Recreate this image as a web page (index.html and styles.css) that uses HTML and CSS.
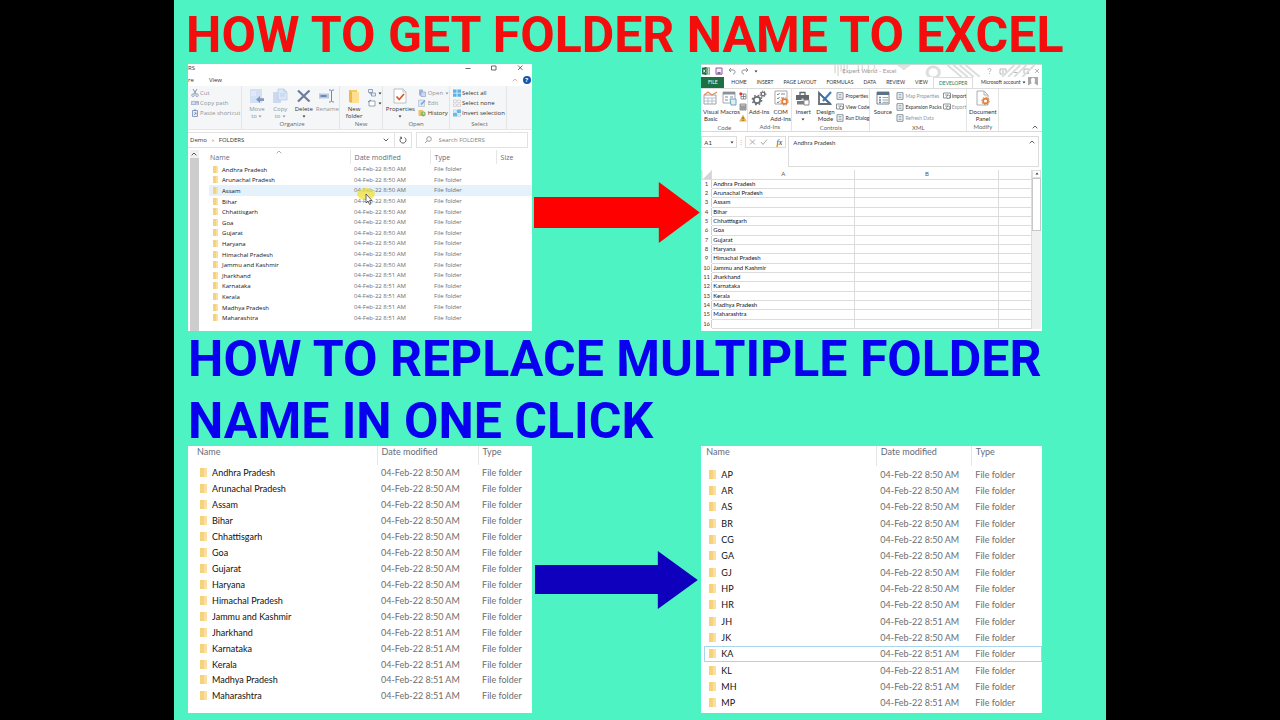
FILE: index.html
```html
<!DOCTYPE html>
<html lang="en">
<head>
<meta charset="utf-8">
<title>Folder names to Excel</title>
<link rel="stylesheet" href="styles.css">
</head>
<body>
<svg class="defs" aria-hidden="true">
<symbol id="cut" viewBox="0 0 8 8"><path d="M2 0l3 5M6 0L3 5" stroke="#8396b5" fill="none"/><circle cx="2" cy="6.2" r="1.3" fill="none" stroke="#8396b5" stroke-width=".8"/><circle cx="6" cy="6.2" r="1.3" fill="none" stroke="#8396b5" stroke-width=".8"/></symbol>
<symbol id="path" viewBox="0 0 8 8"><path d="M0 2h8v4H0z" fill="#a9b9d4"/><path d="M1 3l1 2 1-2 1 2M5 5h2" stroke="#f5f8fc" stroke-width=".7" fill="none"/></symbol>
<symbol id="paste" viewBox="0 0 8 8"><path d="M1.5 1.5h5v6h-5z" fill="#e9eff9" stroke="#7f95bd" stroke-width=".9"/><path d="M3 .5h2v1.5H3z" fill="#7f95bd"/><path d="M3 6l2-2M3.400 3.800H5v1.700" stroke="#5f7fb5" stroke-width=".7" fill="none"/></symbol>
<symbol id="move" viewBox="0 0 16 16"><path d="M1 1h12v14H1z" fill="#d3e0f3"/><path d="M2 3h5v5H2z" fill="#e0e9f7"/><path d="M7 11.500L11 8v2.200h4v2.800h-4V15z" fill="#7f98c0"/></symbol>
<symbol id="copy" viewBox="0 0 16 16"><path d="M1 4h8v11H1z" fill="#cbdaf1"/><path d="M6 1h6l3 3v8H6z" fill="#dce6f6" stroke="#b4c7e4" stroke-width=".7"/><path d="M12 1v3h3M8 6h5M8 8h5" stroke="#b4c7e4" stroke-width=".7" fill="none"/></symbol>
<symbol id="delete" viewBox="0 0 16 16"><path d="M2 2.500l11.500 11M13.500 2.500L2 13.500" stroke="#6c7f9f" stroke-width="2.300"/></symbol>
<symbol id="rename" viewBox="0 0 16 16"><path d="M0 5.500h10v5H0z" fill="#b7c8e2"/><path d="M1.500 7h6v2h-6z" fill="#7188ae"/><path d="M12.500 3v10M10 2c1.500 0 2.500.3 2.500 1.200C12.500 2.300 13.500 2 15 2M10 14c1.500 0 2.500-.3 2.500-1.200 0 .9 1 1.200 2.500 1.200" stroke="#7188ae" fill="none"/></symbol>
<symbol id="folder" viewBox="0 0 16 16"><path d="M3 2h8v12H3z" fill="#f7c95f"/><path d="M6 4h7v11H6z" fill="#ffdf90"/><path d="M3 2l3 2v11l-3-1z" fill="#edb94b"/></symbol>
<symbol id="newitem" viewBox="0 0 8 8"><path d="M.5.5h4v3h-4zM3.500 4h4v3h-4zM2 3v2h2" fill="#eaf0f8" stroke="#7c92ad" stroke-width=".8"/></symbol>
<symbol id="easy" viewBox="0 0 8 8"><path d="M1 2h6v5H1z" fill="#fff" stroke="#8290a0" stroke-width=".8"/><path d="M0 3l3-2" stroke="#5c86b5"/></symbol>
<symbol id="props" viewBox="0 0 16 16"><path d="M2 1h9l3 3v11H2z" fill="#fff" stroke="#aab2ba" stroke-width=".8"/><path d="M11 1v3h3" fill="none" stroke="#aab2ba" stroke-width=".7"/><path d="M4.500 8.500l2.700 3L12 6" fill="none" stroke="#d75b2b" stroke-width="1.800"/></symbol>
<symbol id="open" viewBox="0 0 8 8"><path d="M1 .5h4v6H1z" fill="#9fb7dc"/><path d="M3 3h4.500v4.500H3z" fill="#ccdaef" stroke="#7c98c6" stroke-width=".6"/></symbol>
<symbol id="edit" viewBox="0 0 8 8"><path d="M.5 1h6v6.500h-6z" fill="#dbe6f6" stroke="#a8bad5" stroke-width=".6"/><path d="M3 5.500L7 1.500" stroke="#7d98c5" stroke-width="1.200"/></symbol>
<symbol id="history" viewBox="0 0 8 8"><path d="M.5 1h4l1 1v5h-5z" fill="#ebc35c"/><circle cx="5.300" cy="5" r="2.400" fill="#7fb65b"/><path d="M5.300 3.500V5H6.500" stroke="#fff" stroke-width=".7" fill="none"/></symbol>
<symbol id="selall" viewBox="0 0 8 8"><path d="M0 .5h3.600v3.200H0zM4.400.5H8v3.200H4.400zM0 4.500h3.600v3.200H0zM4.400 4.500H8v3.200H4.400z" fill="#5ab2e6"/></symbol>
<symbol id="selnone" viewBox="0 0 8 8"><path d="M.5 1h2.800v2.400H.5zM4.700 1h2.800v2.400H4.700zM.5 5h2.800v2.400H.5zM4.700 5h2.800v2.400H4.700z" fill="#fff" stroke="#c2b9bd" stroke-width=".6"/></symbol>
<symbol id="selinv" viewBox="0 0 8 8"><path d="M4 .5h4V4H4zM0 4h4v3.500H0z" fill="#6bb9e6"/><path d="M.5 1h2.800v2.400H.5zM4.700 5h2.800v2.400H4.700z" fill="#edf6fc" stroke="#9fc6df" stroke-width=".6"/></symbol>
<symbol id="down" viewBox="0 0 4 3"><path d="M.5.5h3L2 2.500z" fill="currentColor"/></symbol>
<symbol id="chev" viewBox="0 0 6 4"><path d="M.7.7L3 3 5.300.7" fill="none" stroke="currentColor" stroke-width=".8"/></symbol>
<symbol id="chevup" viewBox="0 0 6 4"><path d="M.7 3.300L3 1l2.300 2.300" fill="none" stroke="currentColor" stroke-width=".8"/></symbol>
<symbol id="xl" viewBox="0 0 8 8"><path d="M3 1h5v6H3z" fill="#fff" stroke="#1f7145" stroke-width=".7"/><path d="M5.500 1v6M4 3h4M4 5h4" stroke="#1f7145" stroke-width=".5"/><path d="M0 .8L4.500 0v8L0 7.200z" fill="#1a6b3f"/><path d="M1.200 2.500l2 3M3.200 2.500l-2 3" stroke="#fff" stroke-width=".8"/></symbol>
<symbol id="save" viewBox="0 0 8 8"><path d="M1 1h6v6.200H1z" fill="#f5edf8" stroke="#87619c"/><path d="M2.500 5h3v2h-3z" fill="#87619c"/></symbol>
<symbol id="undo" viewBox="0 0 8 8"><path d="M3 1L1 3l2 2M1.200 3H5c3 0 2.500 4 0 4" fill="none" stroke="#8a9095"/></symbol>
<symbol id="redo" viewBox="0 0 8 8"><path d="M5 1l2 2-2 2M6.800 3H3C0 3 .5 7 3 7" fill="none" stroke="#8a9095"/></symbol>
<symbol id="vb" viewBox="0 0 16 16"><path d="M1 5h12v9H1z" fill="#fff" stroke="#9ba5ad"/><path d="M1 8h12M5 8v6M9 8v6M1 11h12" stroke="#a5b3bf" stroke-width=".8"/><path d="M1 5l4-3 4 3 5-3" fill="none" stroke="#e49160" stroke-width="1.400"/></symbol>
<symbol id="macros" viewBox="0 0 16 16"><path d="M1 2h12v11H1z" fill="#fff" stroke="#a4a9ad"/><path d="M1 2h12v2.500H1z" fill="#8c9297"/><path d="M3 7h3M8 7h3M3 10h3" stroke="#adb4ba" stroke-width="1.300"/><path d="M8 9h6v6H9z" fill="#e0efed" stroke="#68a5c7"/></symbol>
<symbol id="rec" viewBox="0 0 8 8"><path d="M2 2h5v5H2zM2 4.500h5M4.500 2v5" fill="#fff" stroke="#777" stroke-width=".8"/><circle cx="1.800" cy="1.800" r="1.500" fill="#d33"/></symbol>
<symbol id="rel" viewBox="0 0 8 8"><path d="M1 1h6v6H1zM1 3h6M1 5h6M3 3v4M5 3v4" fill="#ddd" stroke="#777" stroke-width=".8"/></symbol>
<symbol id="warn" viewBox="0 0 8 8"><path d="M4 .5L7.800 7.500H.2z" fill="#e9b14a"/><path d="M4 3v2.300M4 6v1" stroke="#5c4520" stroke-width=".8"/></symbol>
<symbol id="gears" viewBox="0 0 16 16"><circle cx="6" cy="10" r="3.200" fill="none" stroke="#6b6f73" stroke-width="1.800"/><circle cx="6" cy="10" r="4.700" fill="none" stroke="#6b6f73" stroke-width="1.400" stroke-dasharray="1.800 1.900"/><circle cx="12" cy="4" r="1.800" fill="none" stroke="#6b6f73" stroke-width="1.300"/><circle cx="12" cy="4" r="2.900" fill="none" stroke="#6b6f73" stroke-dasharray="1.400 1"/></symbol>
<symbol id="com" viewBox="0 0 16 16"><path d="M2 1h12v13H2z" fill="#fff" stroke="#a4a9ad"/><path d="M4 4l1 1 1.500-2M4 8l1 1 1.500-2M4 12l1 1 1.500-2M8 4h4M8 8h3" fill="none" stroke="#85898d"/><circle cx="11.500" cy="11.500" r="2.400" fill="#fff" stroke="#e0803d" stroke-width="1.600"/><circle cx="11.500" cy="11.500" r="3.700" fill="none" stroke="#e0803d" stroke-dasharray="1.500 1.400"/></symbol>
<symbol id="insert" viewBox="0 0 16 16"><path d="M1 5h13v5H1z" fill="#63686c"/><path d="M5 5V2.500h5V5" fill="none" stroke="#63686c" stroke-width="1.300"/><path d="M2 11h11v3.500H2z" fill="#7a7f83"/><path d="M9 10h5v5H9z" fill="#fff" stroke="#888"/><path d="M6.500 8.500h2V11h-2z" fill="#ddd"/></symbol>
<symbol id="design" viewBox="0 0 16 16"><path d="M2 3v11h11z" fill="none" stroke="#676c70" stroke-width="1.800"/><path d="M14 2L6 11" stroke="#3e7fb9" stroke-width="2.200"/><path d="M2 3l12 11" stroke="#3e6f99" stroke-width="1.300"/></symbol>
<symbol id="list" viewBox="0 0 8 8"><path d="M1 .7h6v6.600H1z" fill="#fff" stroke="#6d757b" stroke-width=".8"/><path d="M2.500 2.500h3M2.500 4h3M2.500 5.500h3" stroke="#6e94b0" stroke-width=".7"/></symbol>
<symbol id="code" viewBox="0 0 8 8"><path d="M.5 1h7v5h-7z" fill="#fff" stroke="#71787d" stroke-width=".8"/><circle cx="5.300" cy="4.800" r="1.700" fill="#fff" stroke="#71787d" stroke-width=".8"/><path d="M2 3h3" stroke="#71787d" stroke-width=".7"/></symbol>
<symbol id="source" viewBox="0 0 16 16"><path d="M2 2h12v12H2z" fill="#fff" stroke="#7c868d"/><path d="M2 2h12v3H2z" fill="#5b7188"/><path d="M4 7.500h2M4 10h2M4 12.300h2" stroke="#6b8fae" stroke-width="1.500"/><path d="M7.500 7.500H13M7.500 10H13M7.500 12.300H13" stroke="#98a2aa"/></symbol>
<symbol id="docpanel" viewBox="0 0 16 16"><path d="M2 1h7l4 4v10H2z" fill="#fff" stroke="#aab0b5"/><path d="M9 1v4h4" fill="none" stroke="#aab0b5"/><circle cx="10.500" cy="11" r="2.400" fill="#fff" stroke="#e0803d" stroke-width="1.700"/><circle cx="10.500" cy="11" r="3.800" fill="none" stroke="#e0803d" stroke-dasharray="1.500 1.400"/></symbol>
</svg>

<main class="poster">
<h1 class="title title-red">HOW TO GET FOLDER NAME TO EXCEL</h1>

<div class="pair">
<section class="shot explorer" aria-label="File Explorer">
 <header class="ex-title"><span class="ex-name">RS</span><svg viewBox="0 0 60 8"><path d="M.5 4.500h5M26.500 2h4.500v4h-4.500zM53 1.500l4.500 4.500M57.500 1.500L53 6" fill="none" stroke="#444" stroke-width=".8"/></svg></header>
 <nav class="ex-tabs"><span>re</span><span>View</span><svg class="i-chev push red"><use href="#chevup"/></svg><b class="help">?</b></nav>
 <div class="ex-ribbon">
  <div class="grp g-clip"><div class="items"><div class="stack">
   <button class="dim"><svg class="i8"><use href="#cut"/></svg>Cut</button><button class="dim"><svg class="i8"><use href="#path"/></svg>Copy path</button><button class="dim"><svg class="i8"><use href="#paste"/></svg>Paste shortcut</button></div></div></div>
  <div class="grp g-org"><div class="items">
   <button class="big dim"><svg class="i16"><use href="#move"/></svg>Move<br>to <svg class="i-dn"><use href="#down"/></svg></button>
   <button class="big dim"><svg class="i16"><use href="#copy"/></svg>Copy<br>to <svg class="i-dn"><use href="#down"/></svg></button>
   <button class="big"><svg class="i16"><use href="#delete"/></svg>Delete<br><svg class="i-dn"><use href="#down"/></svg></button>
   <button class="big dim"><svg class="i16"><use href="#rename"/></svg>Rename</button></div><div class="cap">Organize</div></div>
  <div class="grp g-new"><div class="items">
   <button class="big"><svg class="i16"><use href="#folder"/></svg>New<br>folder</button>
   <div class="stack"><button aria-label="New item"><svg class="i8"><use href="#newitem"/></svg><svg class="i-dn"><use href="#down"/></svg></button><button aria-label="Easy access"><svg class="i8"><use href="#easy"/></svg><svg class="i-dn"><use href="#down"/></svg></button></div></div><div class="cap">New</div></div>
  <div class="grp g-open"><div class="items">
   <button class="big"><svg class="i16"><use href="#props"/></svg>Properties<br><svg class="i-dn"><use href="#down"/></svg></button>
   <div class="stack"><button class="dim"><svg class="i8"><use href="#open"/></svg>Open <svg class="i-dn"><use href="#down"/></svg></button><button class="dim"><svg class="i8"><use href="#edit"/></svg>Edit</button><button><svg class="i8"><use href="#history"/></svg>History</button></div></div><div class="cap">Open</div></div>
  <div class="grp g-sel"><div class="items"><div class="stack">
   <button><svg class="i8"><use href="#selall"/></svg>Select all</button><button><svg class="i8"><use href="#selnone"/></svg>Select none</button><button><svg class="i8"><use href="#selinv"/></svg>Invert selection</button></div></div><div class="cap">Select</div></div>
 </div>
 <div class="ex-address">
  <div class="crumbs"><span>Demo</span><span class="sep">›</span><span>FOLDERS</span><svg class="i-chev push"><use href="#chev"/></svg></div>
  <button class="reload" aria-label="Refresh"><svg viewBox="0 0 8 8"><path d="M2.500 1.500A3 3 0 1 0 5.500 1.500M2.500 3V1.200H.9" fill="none" stroke="#555" stroke-width=".9"/></svg></button>
  <label class="search"><svg viewBox="0 0 8 8"><circle cx="5" cy="3" r="2.300" fill="none" stroke="#888" stroke-width=".8"/><path d="M3.300 4.700L1 7" stroke="#888" stroke-width=".8"/></svg><input type="search" placeholder="Search FOLDERS" aria-label="Search FOLDERS"></label>
 </div>
 <div class="ex-body">
  <div class="ex-scroll"><svg class="i-chev"><use href="#chevup"/></svg></div>
  <div class="ex-files">
  <svg class="sort"><use href="#chevup"/></svg>
  <table class="files small">
   <colgroup><col class="s-name"><col class="s-date"><col class="s-type"><col></colgroup>
   <thead><tr><th>Name</th><th>Date modified</th><th>Type</th><th>Size</th></tr></thead>
   <tbody>
   <tr><td>Andhra Pradesh</td><td>04-Feb-22 8:50 AM</td><td>File folder</td><td></td></tr>
   <tr><td>Arunachal Pradesh</td><td>04-Feb-22 8:50 AM</td><td>File folder</td><td></td></tr>
   <tr class="hover"><td>Assam</td><td>04-Feb-22 8:50 AM</td><td>File folder</td><td></td></tr>
   <tr><td>Bihar</td><td>04-Feb-22 8:50 AM</td><td>File folder</td><td></td></tr>
   <tr><td>Chhattisgarh</td><td>04-Feb-22 8:50 AM</td><td>File folder</td><td></td></tr>
   <tr><td>Goa</td><td>04-Feb-22 8:50 AM</td><td>File folder</td><td></td></tr>
   <tr><td>Gujarat</td><td>04-Feb-22 8:50 AM</td><td>File folder</td><td></td></tr>
   <tr><td>Haryana</td><td>04-Feb-22 8:50 AM</td><td>File folder</td><td></td></tr>
   <tr><td>Himachal Pradesh</td><td>04-Feb-22 8:50 AM</td><td>File folder</td><td></td></tr>
   <tr><td>Jammu and Kashmir</td><td>04-Feb-22 8:50 AM</td><td>File folder</td><td></td></tr>
   <tr><td>Jharkhand</td><td>04-Feb-22 8:51 AM</td><td>File folder</td><td></td></tr>
   <tr><td>Karnataka</td><td>04-Feb-22 8:51 AM</td><td>File folder</td><td></td></tr>
   <tr><td>Kerala</td><td>04-Feb-22 8:51 AM</td><td>File folder</td><td></td></tr>
   <tr><td>Madhya Pradesh</td><td>04-Feb-22 8:51 AM</td><td>File folder</td><td></td></tr>
   <tr><td>Maharashtra</td><td>04-Feb-22 8:51 AM</td><td>File folder</td><td></td></tr>
   </tbody>
  </table>
  <svg class="pointer" viewBox="0 0 20 18"><ellipse cx="10" cy="6" rx="9" ry="6" fill="#f0e03a" fill-opacity=".75"/><path d="M10 6v9l2-2 1.500 3.500 1.500-.7-1.500-3.300H16z" fill="#fff" stroke="#444" stroke-width=".8"/></svg>
  </div>
 </div>
</section>

<svg class="arrow" viewBox="0 0 170 267" role="img" aria-label="Arrow"><path d="M2 133h125v-15l41 30.500L127 179v-15H2z" fill="#fe0000"/></svg>

<section class="shot excel" aria-label="Excel">
 <header class="xl-title">
  <svg class="i8"><use href="#xl"/></svg><svg class="i8"><use href="#save"/></svg><svg class="i8"><use href="#undo"/></svg><svg class="i8"><use href="#redo"/></svg><svg class="i-dn"><use href="#down"/></svg>
  <div class="xl-art"><svg viewBox="0 0 204 13" preserveAspectRatio="none"><g fill="none" stroke="#dedede"><path d="M1 0v9M4 0v12M7 0v7M10 0v10M13 0v5M24 0v8M28 0v5M34 0v9M40 0v5" stroke-width="1.500"/><path d="M63 0h12l-6 5z" fill="#e3e3e3"/><circle cx="98" cy="8" r="6" stroke-width="3"/><path d="M112 0l14 13M118 0l14 13M124 0l14 13M130 0l14 13" stroke-width="2"/><path d="M166 13l12-13M172 13l12-13M178 13l12-13M186 13l12-13" stroke-width="2"/></g></svg><span>Expert World - Excel</span></div>
  <svg class="xl-win" viewBox="0 0 54 8"><path d="M2 3c0-2 3-2 3 0 0 1-1.500 1-1.500 2M3.500 6v1M14 2h6v5h-6zM17 3v3M27.500 5.500h4M38 2h4.500v4.500H38zM49 2l4 4M53 2l-4 4" fill="none" stroke="#a5a5a5" stroke-width=".8"/></svg>
 </header>
 <nav class="xl-tabs"><b class="file">FILE</b><span>HOME</span><span>INSERT</span><span>PAGE LAYOUT</span><span>FORMULAS</span><span>DATA</span><span>REVIEW</span><span>VIEW</span><span class="on">DEVELOPER</span><span class="acct">Microsoft account <svg class="i-dn"><use href="#down"/></svg></span><svg class="face" viewBox="0 0 10 11"><path d="M0 0h10v11H0z" fill="#a9a9a9"/><path d="M3 3c0-3 4-3 4 0 0 2-.5 2.500-.5 3.500L10 8.500V11H0V8.500l3.500-2C3.500 5.500 3 5 3 3" fill="#fff"/></svg></nav>
 <div class="xl-ribbon">
  <div class="grp x-code"><div class="items"><button class="big"><svg class="i16"><use href="#vb"/></svg>Visual<br>Basic</button><button class="big"><svg class="i16"><use href="#macros"/></svg>Macros</button><div class="stack"><button aria-label="Record macro"><svg class="i8"><use href="#rec"/></svg></button><button aria-label="Relative references"><svg class="i8"><use href="#rel"/></svg></button><button aria-label="Macro security"><svg class="i8"><use href="#warn"/></svg></button></div></div><div class="cap">Code</div></div>
  <div class="grp x-add"><div class="items"><button class="big"><svg class="i16"><use href="#gears"/></svg>Add-Ins</button><button class="big"><svg class="i16"><use href="#com"/></svg>COM<br>Add-Ins</button></div><div class="cap">Add-Ins</div></div>
  <div class="grp x-ctl"><div class="items"><button class="big"><svg class="i16"><use href="#insert"/></svg>Insert<br><svg class="i-dn"><use href="#down"/></svg></button><button class="big"><svg class="i16"><use href="#design"/></svg>Design<br>Mode</button><div class="stack"><button><svg class="i8"><use href="#list"/></svg>Properties</button><button><svg class="i8"><use href="#code"/></svg>View Code</button><button><svg class="i8"><use href="#list"/></svg>Run Dialog</button></div></div><div class="cap">Controls</div></div>
  <div class="grp x-xml"><div class="items"><button class="big"><svg class="i16"><use href="#source"/></svg>Source</button><div class="stack"><button class="dim"><svg class="i8"><use href="#list"/></svg>Map Properties</button><button><svg class="i8"><use href="#list"/></svg>Expansion Packs</button><button class="dim"><svg class="i8"><use href="#list"/></svg>Refresh Data</button></div><div class="stack"><button><svg class="i8"><use href="#code"/></svg>Import</button><button class="dim"><svg class="i8"><use href="#code"/></svg>Export</button></div></div><div class="cap">XML</div></div>
  <div class="grp x-mod"><div class="items"><button class="big"><svg class="i16"><use href="#docpanel"/></svg>Document<br>Panel</button></div><div class="cap">Modify</div></div>
  <svg class="i-chev fold"><use href="#chevup"/></svg>
 </div>
 <div class="xl-formula">
  <div class="namebox"><input value="A1" aria-label="Name box"><svg class="i-dn"><use href="#down"/></svg></div>
  <span class="dots">⋮</span>
  <div class="fx"><svg viewBox="0 0 24 8"><path d="M1 1.500l5 5M6 1.500l-5 5M12 4l2 2.500 4-5" fill="none" stroke="#a8a8a8"/></svg><i>fx</i></div>
  <div class="fbar"><input value="Andhra Pradesh" aria-label="Formula bar"><svg class="i-chev"><use href="#chevup"/></svg></div>
 </div>
 <div class="xl-sheet">
  <table class="grid">
   <colgroup><col class="c-n"><col class="c-a"><col class="c-b"><col></colgroup>
   <thead><tr><th class="corner"></th><th>A</th><th>B</th><th></th></tr></thead>
   <tbody>
   <tr><th>1</th><td>Andhra Pradesh</td><td></td><td></td></tr>
   <tr><th>2</th><td>Arunachal Pradesh</td><td></td><td></td></tr>
   <tr><th>3</th><td>Assam</td><td></td><td></td></tr>
   <tr><th>4</th><td>Bihar</td><td></td><td></td></tr>
   <tr><th>5</th><td>Chhattisgarh</td><td></td><td></td></tr>
   <tr><th>6</th><td>Goa</td><td></td><td></td></tr>
   <tr><th>7</th><td>Gujarat</td><td></td><td></td></tr>
   <tr><th>8</th><td>Haryana</td><td></td><td></td></tr>
   <tr><th>9</th><td>Himachal Pradesh</td><td></td><td></td></tr>
   <tr><th>10</th><td>Jammu and Kashmir</td><td></td><td></td></tr>
   <tr><th>11</th><td>Jharkhand</td><td></td><td></td></tr>
   <tr><th>12</th><td>Karnataka</td><td></td><td></td></tr>
   <tr><th>13</th><td>Kerala</td><td></td><td></td></tr>
   <tr><th>14</th><td>Madhya Pradesh</td><td></td><td></td></tr>
   <tr><th>15</th><td>Maharashtra</td><td></td><td></td></tr>
   <tr><th>16</th><td></td><td></td><td></td></tr>
   </tbody>
  </table>
  <div class="vbar"><b><svg class="i-dn"><use href="#down"/></svg></b><i></i></div>
 </div>
</section>
</div>

<h2 class="title title-blue">HOW TO REPLACE MULTIPLE FOLDER<br>NAME IN ONE CLICK</h2>

<div class="pair">
<section class="shot" aria-label="Folders before">
 <table class="files large before">
  <colgroup><col class="b-name"><col class="b-date"><col></colgroup>
  <thead><tr><th>Name</th><th>Date modified</th><th>Type</th></tr></thead>
  <tbody>
  <tr><td>Andhra Pradesh</td><td>04-Feb-22 8:50 AM</td><td>File folder</td></tr>
  <tr><td>Arunachal Pradesh</td><td>04-Feb-22 8:50 AM</td><td>File folder</td></tr>
  <tr><td>Assam</td><td>04-Feb-22 8:50 AM</td><td>File folder</td></tr>
  <tr><td>Bihar</td><td>04-Feb-22 8:50 AM</td><td>File folder</td></tr>
  <tr><td>Chhattisgarh</td><td>04-Feb-22 8:50 AM</td><td>File folder</td></tr>
  <tr><td>Goa</td><td>04-Feb-22 8:50 AM</td><td>File folder</td></tr>
  <tr><td>Gujarat</td><td>04-Feb-22 8:50 AM</td><td>File folder</td></tr>
  <tr><td>Haryana</td><td>04-Feb-22 8:50 AM</td><td>File folder</td></tr>
  <tr><td>Himachal Pradesh</td><td>04-Feb-22 8:50 AM</td><td>File folder</td></tr>
  <tr><td>Jammu and Kashmir</td><td>04-Feb-22 8:50 AM</td><td>File folder</td></tr>
  <tr><td>Jharkhand</td><td>04-Feb-22 8:51 AM</td><td>File folder</td></tr>
  <tr><td>Karnataka</td><td>04-Feb-22 8:51 AM</td><td>File folder</td></tr>
  <tr><td>Kerala</td><td>04-Feb-22 8:51 AM</td><td>File folder</td></tr>
  <tr><td>Madhya Pradesh</td><td>04-Feb-22 8:51 AM</td><td>File folder</td></tr>
  <tr><td>Maharashtra</td><td>04-Feb-22 8:51 AM</td><td>File folder</td></tr>
  </tbody>
 </table>
</section>

<svg class="arrow" viewBox="0 0 170 267" role="img" aria-label="Arrow"><path d="M3 119h123v-14l40 29-40 29v-15H3z" fill="#0f00bd"/></svg>

<section class="shot" aria-label="Folders after">
 <table class="files large after">
  <colgroup><col class="a-name"><col class="a-date"><col></colgroup>
  <thead><tr><th>Name</th><th>Date modified</th><th>Type</th></tr></thead>
  <tbody>
  <tr><td>AP</td><td>04-Feb-22 8:50 AM</td><td>File folder</td></tr>
  <tr><td>AR</td><td>04-Feb-22 8:50 AM</td><td>File folder</td></tr>
  <tr><td>AS</td><td>04-Feb-22 8:50 AM</td><td>File folder</td></tr>
  <tr><td>BR</td><td>04-Feb-22 8:50 AM</td><td>File folder</td></tr>
  <tr><td>CG</td><td>04-Feb-22 8:50 AM</td><td>File folder</td></tr>
  <tr><td>GA</td><td>04-Feb-22 8:50 AM</td><td>File folder</td></tr>
  <tr><td>GJ</td><td>04-Feb-22 8:50 AM</td><td>File folder</td></tr>
  <tr><td>HP</td><td>04-Feb-22 8:50 AM</td><td>File folder</td></tr>
  <tr><td>HR</td><td>04-Feb-22 8:50 AM</td><td>File folder</td></tr>
  <tr><td>JH</td><td>04-Feb-22 8:51 AM</td><td>File folder</td></tr>
  <tr><td>JK</td><td>04-Feb-22 8:50 AM</td><td>File folder</td></tr>
  <tr class="focus"><td>KA</td><td>04-Feb-22 8:51 AM</td><td>File folder</td></tr>
  <tr><td>KL</td><td>04-Feb-22 8:51 AM</td><td>File folder</td></tr>
  <tr><td>MH</td><td>04-Feb-22 8:51 AM</td><td>File folder</td></tr>
  <tr><td>MP</td><td>04-Feb-22 8:51 AM</td><td>File folder</td></tr>
  </tbody>
 </table>
</section>
</div>
</main>
</body>
</html>
```
FILE: styles.css
```css
* { box-sizing: border-box; }
body { margin: 0; background: #000; font-family: "Open Sans", "Noto Sans", sans-serif; color: #333; }
svg { display: block; flex: none; }
button, input { font: inherit; color: inherit; border: 0; background: none; padding: 0; margin: 0; min-width: 0; }
.defs { position: absolute; width: 0; height: 0; }

.poster { width: 72.8%; min-height: 100vh; margin: 0 auto; padding: 0 64px 7px 14px; background: #4ef3c3; }
.title { margin: 0; white-space: nowrap; font-family: Roboto, "Liberation Sans", Arial, sans-serif; font-weight: bold; font-size: 50px; }
.title-red { height: 64px; line-height: 64px; padding-top: 3px; margin-left: -2px; color: #f30d0d; }
.title-blue { line-height: 62px; margin-top: -3px; height: 118px; color: #0a00f0; }

.pair { display: grid; grid-template-columns: 344fr 170fr 341fr; }
.shot { background: #fff; height: 267px; overflow: hidden; min-width: 0; }
.arrow { width: 100%; height: 267px; }

.i8 { width: 8px; height: 8px; }
.i16 { width: 16px; height: 16px; }
.i-dn { width: 4px; height: 3px; display: inline-block; vertical-align: middle; }
.i-chev { width: 6px; height: 4px; }
.push { margin-left: auto; }

/* shared ribbon parts */
.grp { display: flex; flex-direction: column; flex: none; border-right: 1px solid #e3e4e6; min-width: 0; }
.items { display: flex; flex: 1; padding-top: 2px; }
.stack { display: flex; flex-direction: column; flex: none; }
.stack button { display: flex; align-items: center; gap: 2px; height: 10px; white-space: nowrap; }
.big { display: block; flex: 1; line-height: 7px; text-align: center; align-self: flex-start; white-space: nowrap; }
.big .i16 { margin: 0 auto 2px; }
.cap { height: 9px; line-height: 9px; text-align: center; color: #666; }
.dim { color: #8f959c; }

/* File Explorer */
.explorer { display: flex; flex-direction: column; font-size: 6px; }
.ex-title { display: flex; justify-content: space-between; height: 9px; line-height: 8px; padding-right: 5px; overflow: hidden; }
.ex-title svg { width: 64px; height: 8px; }
.ex-tabs { display: flex; align-items: center; gap: 15px; height: 13px; padding: 0 1px 0 0; }
.ex-tabs .help { width: 8px; height: 8px; margin-left: -10px; border-radius: 50%; background: #1456b0; color: #fff; text-align: center; line-height: 8px; }
.red { color: #d99a9a; }
.ex-ribbon { display: flex; height: 44px; background: #f5f6f7; border-bottom: 1px solid #e6e7e8; }
.g-clip { width: 54px; padding-left: 3px; }
.g-clip button { gap: 1px; }
.g-org { width: 98px; padding-left: 3px; }
.g-new { width: 43px; }
.g-open { width: 67px; }
.g-sel { width: 57px; padding-left: 3px; }
.g-sel button { gap: 1px; }
.ex-address { display: flex; height: 20px; padding: 2px 4px 2px 0; gap: 4px; }
.crumbs { display: flex; flex: 1; align-items: center; gap: 5px; border: 1px solid #e2e2e2; border-left: 0; margin-right: -5px; padding: 0 5px 0 2px; }
.reload { width: 18px; border: 1px solid #e2e2e2; padding: 0 4px; }
.reload svg { width: 8px; height: 8px; }
.search { display: flex; align-items: center; width: 112px; border: 1px solid #e2e2e2; padding: 0 7px; gap: 7px; }
.search svg { width: 8px; height: 8px; }
.search input { flex: 1; }
.search input::placeholder { color: #808080; opacity: 1; }
.ex-body { display: flex; flex: 1; }
.ex-scroll { width: 9px; margin: 0 10px 0 2px; padding: 2px 1px; border-top: 8px solid #f0f0f0; background: #cdcdcd; }
.ex-scroll svg { margin-top: -8px; }
.ex-files { position: relative; flex: 1; min-width: 0; }
.sort { position: absolute; left: 67px; top: 0; width: 6px; height: 4px; color: #999; }
.pointer { position: absolute; left: 147px; top: 38px; width: 20px; height: 18px; }

/* file lists */
.files { width: 100%; border-collapse: collapse; table-layout: fixed; }
.files th, .files td { padding: 0 0 0 4px; font-weight: normal; text-align: left; white-space: nowrap; line-height: 1; color: #6e6e6e; }
.files th { color: #5f6b7c; border-right: 1px solid #e6e6e6; }
.files th:last-child { border-right: 0; }
.files td:first-child { color: #111; }
.files td:first-child::before { content: ""; display: inline-block; vertical-align: -1px; background: linear-gradient(90deg, #f7d27c 60%, #f9e0a0 60%); }
.small { height: 173px; }
.small th { font-size: 7px; }
.small thead tr { height: 14px; }
.small th:first-child { padding-left: 1px; }
.small td:first-child::before { width: 5px; height: 7px; margin-right: 4px; }
.s-name { width: 141px; } .s-date { width: 80px; } .s-type { width: 66px; }
.hover { background: #e5f1fb; }
.large { font-family: Lato, "Open Sans", sans-serif; font-size: 9px; }
.large td:first-child::before { width: 7px; height: 9px; margin-right: 5px; }
.files.large thead th { vertical-align: top; padding-top: 1px; }
.before { height: 258px; }
.before thead tr { height: 19px; }
.before th:first-child { padding-left: 9px; }
.before td:first-child { padding-left: 12px; }
.b-name { width: 189px; } .b-date { width: 101px; }
.after { height: 265px; width: calc(100% - 3px); margin-left: 3px; }
.after thead tr { height: 20px; }
.after th:first-child { padding-left: 2px; }
.after td:first-child { padding-left: 5px; }
.a-name { width: 172px; } .a-date { width: 95px; }
.focus { outline: 1px solid #a9d5ea; outline-offset: -1px; }

/* Excel */
.excel { display: flex; flex-direction: column; font-family: Lato, "Open Sans", sans-serif; font-size: 6px; border-top: 1px solid #c8d8d2; }
.xl-title { display: flex; align-items: center; gap: 5px; height: 12px; padding: 0 2px 0 1px; }
.xl-art { position: relative; flex: 1; height: 12px; margin-left: 71px; line-height: 12px; color: #9a9a9a; }
.xl-art svg { width: 100%; height: 12px; }
.xl-art span { position: absolute; left: 8px; top: 0; white-space: nowrap; }
.xl-win { width: 54px; height: 8px; margin-left: -60px; }
.xl-tabs { display: flex; align-items: center; height: 12px; gap: 10px; border-bottom: 1px solid #dcdcdc; font-size: 5px; line-height: 11px; white-space: nowrap; }
.file { flex: none; width: 23px; margin-right: -3px; background: #1c7044; color: #fff; text-align: center; font-weight: normal; }
.on { margin: 0 -5px; padding: 0 5px; border: 1px solid #dcdcdc; border-bottom: 0; color: #2a7a50; }
.acct { margin-left: auto; }
.face { width: 10px; height: 11px; margin: 0 4px 0 -8px; }
.xl-ribbon { display: flex; height: 43px; border-bottom: 1px solid #d9d9d9; }
.xl-ribbon .items { padding-top: 1px; }
.xl-ribbon .stack button { height: 11px; gap: 1px; font-size: 5px; }
.x-code { width: 47px; } .x-add { width: 44px; } .x-ctl { width: 78px; } .x-xml { width: 97px; } .x-mod { width: 32px; }
.x-xml .items { gap: 1px; }
.fold { margin: auto 4px 2px auto; }
.xl-formula { display: flex; height: 36px; padding: 4px 3px 0 0; align-items: flex-start; }
.namebox, .fx { display: flex; align-items: center; height: 12px; border: 1px solid #dcdcdc; }
.namebox { width: 36px; padding: 0 2px; }
.namebox input { flex: 1; }
.dots { width: 8px; text-align: center; line-height: 12px; color: #aaa; }
.fx { width: 41px; padding: 0 3px; justify-content: space-between; }
.fx svg { width: 24px; height: 8px; }
.fx i { font-family: "Liberation Serif", serif; font-size: 8px; }
.fbar { display: flex; flex: 1; height: 31px; margin-left: 2px; padding: 1px 3px 0 4px; align-items: flex-start; border: 1px solid #dcdcdc; }
.fbar input { flex: 1; height: 8px; }
.fbar svg { margin-top: 2px; }
.xl-sheet { display: flex; height: 159px; margin-top: 2px; }
.grid { flex: 1; height: 159px; border-collapse: collapse; table-layout: fixed; }
.grid th, .grid td { padding: 0 1px; border: 1px solid #dcdcdc; font-weight: normal; text-align: left; line-height: 1; white-space: nowrap; color: #111; }
.grid thead tr { height: 9px; }
.grid thead th { text-align: center; border-top: 0; color: #555; }
.grid tbody th { border-color: #fff #cfcfcf #fff #fff; border-left: 0; padding: 0; text-align: center; color: #444; }
.grid .corner { background: linear-gradient(135deg, #fff 50%, #d4d4d4 50%); }
.c-n { width: 10px; } .c-a { width: 143px; } .c-b { width: 144px; }
.vbar { width: 9px; background: #f0f0f0; margin-right: 1px; }
.vbar b { display: block; height: 8px; padding-left: 2px; border: 1px solid #ddd; background: #fff; line-height: 3px; }
.vbar b svg { transform: rotate(180deg); }
.vbar i { display: block; height: 53px; border: 1px solid #c8c8c8; background: #fff; }
```
